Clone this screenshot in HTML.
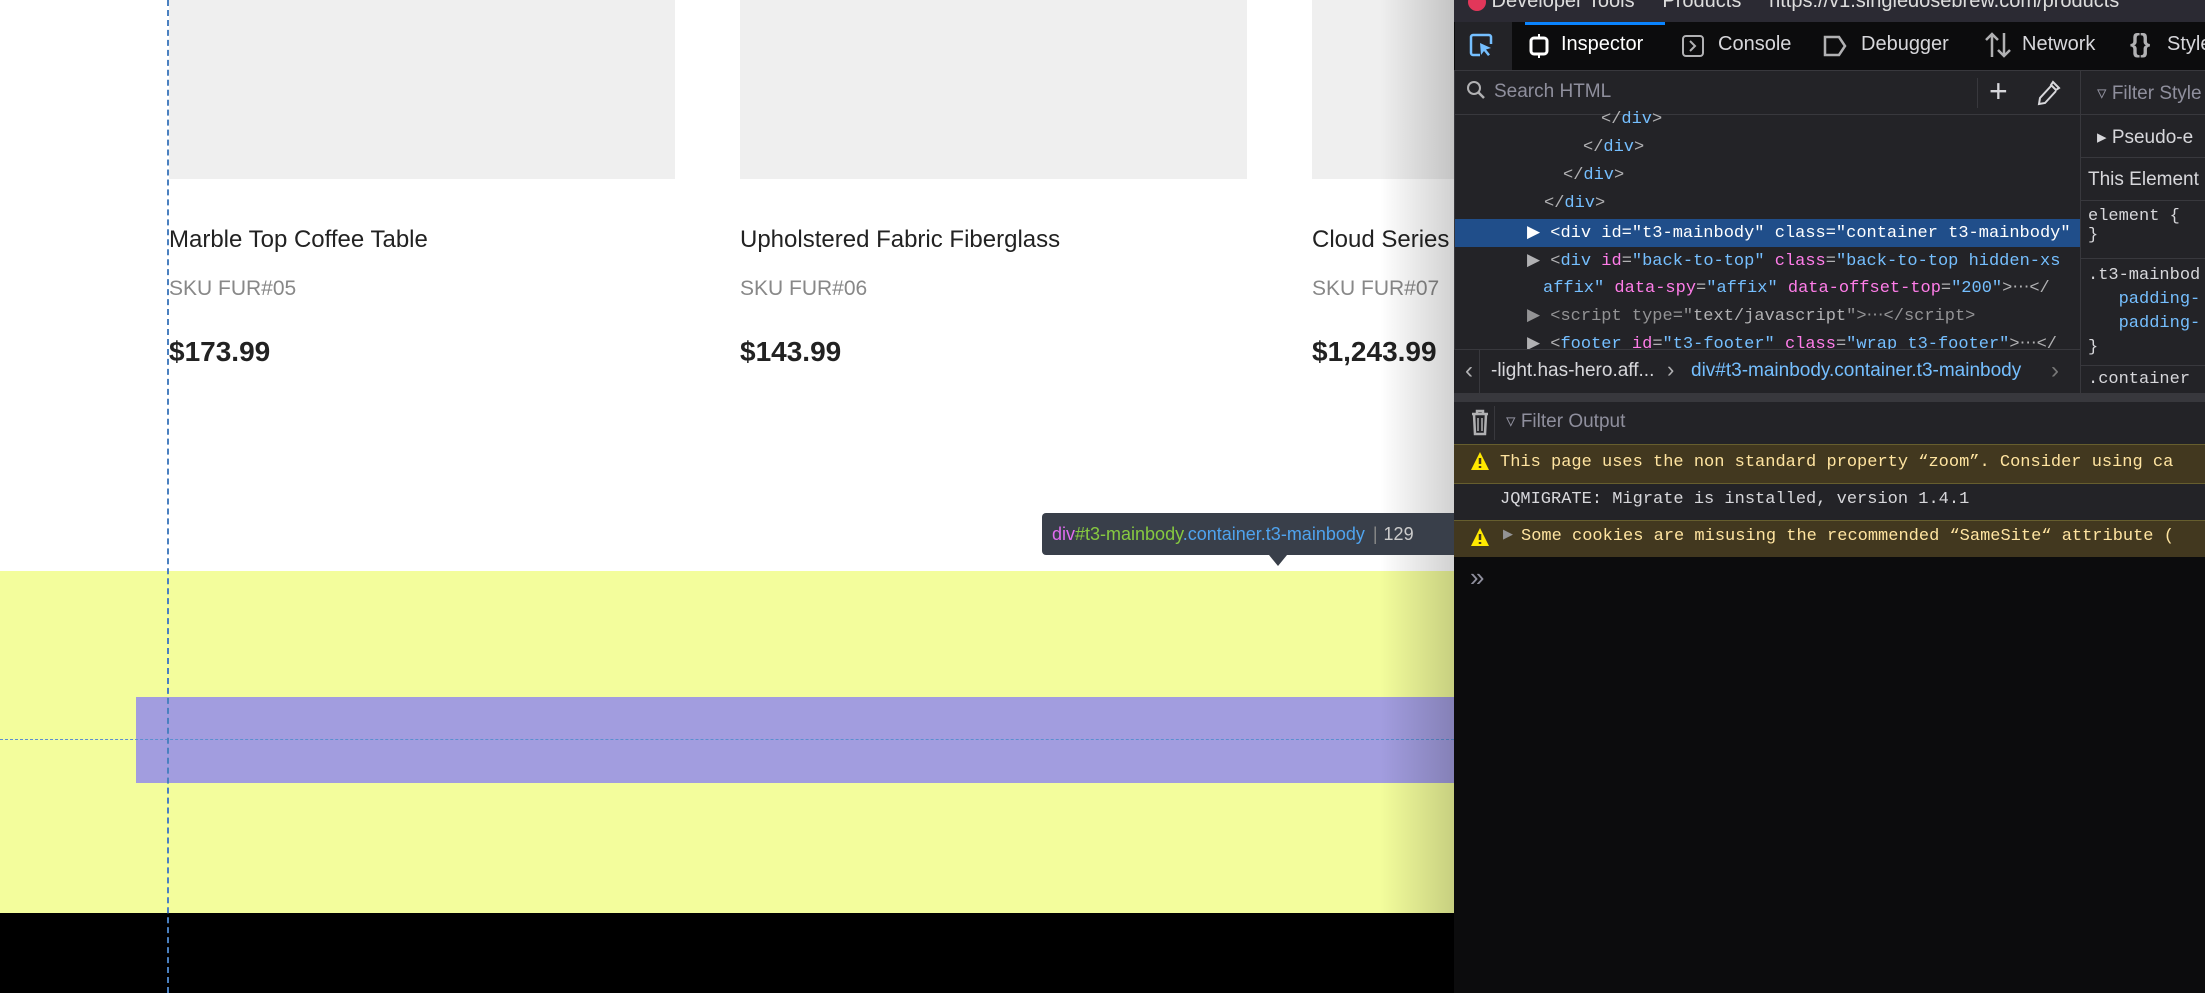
<!DOCTYPE html>
<html><head><meta charset="utf-8"><style>
*{margin:0;padding:0;box-sizing:border-box}
body{width:2205px;height:993px;overflow:hidden;position:relative;background:#fff;font-family:"Liberation Sans",sans-serif}
.a{position:absolute}
.ph{background:#efefef;top:0;height:179px}
.t{font-size:24px;color:#222;top:226px}
.s{font-size:21px;color:#888;top:277px}
.p{font-size:28px;color:#222;font-weight:bold;top:336px}
.mono{font-family:"Liberation Mono",monospace;font-size:17px;white-space:nowrap}
.tag{color:#b1b1b3}
.at{color:#ff7de9}
.av{color:#75bfff}
.ui{font-size:20px;color:#d7d7db;white-space:nowrap}
</style></head><body>
<div class="a ph" style="left:169px;width:506px"></div>
<div class="a ph" style="left:740px;width:507px"></div>
<div class="a ph" style="left:1312px;width:200px"></div>
<div class="a t" style="left:169px">Marble Top Coffee Table</div>
<div class="a t" style="left:740px">Upholstered Fabric Fiberglass</div>
<div class="a t" style="left:1312px">Cloud Series</div>
<div class="a s" style="left:169px">SKU FUR#05</div>
<div class="a s" style="left:740px">SKU FUR#06</div>
<div class="a s" style="left:1312px">SKU FUR#07</div>
<div class="a p" style="left:169px">$173.99</div>
<div class="a p" style="left:740px">$143.99</div>
<div class="a p" style="left:1312px">$1,243.99</div>
<div class="a" style="left:0;top:571px;width:1454px;height:342px;background:#f3fd9c"></div>
<div class="a" style="left:136px;top:697px;width:1318px;height:86px;background:#a29ddf"></div>
<div class="a" style="left:0;top:913px;width:1454px;height:80px;background:#000"></div>
<div class="a" style="left:0;top:739px;width:1454px;border-top:1px dashed #5b8fd0"></div>
<div class="a" style="left:167px;top:0;height:993px;border-left:2px dashed #4a80c0"></div>
<div class="a" style="left:1380px;top:0;width:74px;height:913px;background:linear-gradient(to right,rgba(0,0,0,0),rgba(0,0,0,0.18))"></div>
<div class="a" style="left:1042px;top:513px;width:420px;height:42px;background:#393f4a;border-radius:4px;font-size:18px;line-height:42px;padding-left:10px;white-space:nowrap"><span style="color:#e16cf0">div</span><span style="color:#86c940">#t3-mainbody</span><span style="color:#4fa3ee">.container.t3-mainbody</span><span style="color:#888;margin-left:8px">|</span><span style="color:#ccc;margin-left:6px">129</span></div>
<div class="a" style="left:1269px;top:555px;border-left:9px solid transparent;border-right:9px solid transparent;border-top:11px solid #393f4a"></div>
<div class="a" style="left:1454px;top:0;width:751px;height:993px;background:#232327;border-left:1px solid #38383d"></div>
<div class="a" style="left:1454px;top:0;width:751px;height:22px;background:#2b2a33;overflow:hidden"><div class="ui" style="position:absolute;left:14px;top:-10px;color:#ddd"><span style="display:inline-block;width:18px;height:18px;border-radius:50%;background:#e2375a;vertical-align:middle"></span> Developer Tools &nbsp;&nbsp;&nbsp; Products &nbsp;&nbsp;&nbsp; https://v1.singledosebrew.com/products</div></div>
<div class="a" style="left:1454px;top:22px;width:751px;height:48px;background:#0c0c0d"></div>
<div class="a" style="left:1455px;top:22px;width:57px;height:48px;background:#232327"></div>
<svg class="a" style="left:1468px;top:32px" width="28" height="28" viewBox="0 0 28 28"><path d="M12 23H5a2 2 0 0 1-2-2V5a2 2 0 0 1 2-2h16a2 2 0 0 1 2 2v7" fill="none" stroke="#75bfff" stroke-width="2.5"/><path d="M12 11l11 5-5 1.5 4 5-2 1.5-4-5-3 4z" fill="#75bfff"/></svg>
<div class="a" style="left:1525px;top:22px;width:140px;height:3px;background:#0a84ff"></div>
<svg class="a" style="left:1527px;top:33px" width="24" height="26" viewBox="0 0 24 26"><rect x="4" y="5" width="16" height="16" rx="3" fill="none" stroke="#fff" stroke-width="3"/><path d="M12 1v4M12 21v4" stroke="#fff" stroke-width="2"/></svg>
<div class="a ui" style="left:1561px;top:33px;color:#fff">Inspector</div>
<svg class="a" style="left:1681px;top:34px" width="24" height="24" viewBox="0 0 24 24"><rect x="2" y="2" width="20" height="20" rx="3" fill="none" stroke="#b1b1b3" stroke-width="2"/><path d="M9 7l5 5-5 5" fill="none" stroke="#b1b1b3" stroke-width="2"/></svg>
<div class="a ui" style="left:1718px;top:33px">Console</div>
<svg class="a" style="left:1822px;top:34px" width="26" height="24" viewBox="0 0 26 24"><path d="M3 3h14l6 9-6 9H3z" fill="none" stroke="#b1b1b3" stroke-width="2.5"/></svg>
<div class="a ui" style="left:1861px;top:33px">Debugger</div>
<svg class="a" style="left:1984px;top:31px" width="28" height="28" viewBox="0 0 28 28"><path d="M8 26V3M2 9l6-6 6 6M20 2v23M14 19l6 6 6-6" fill="none" stroke="#b1b1b3" stroke-width="2.5"/></svg>
<div class="a ui" style="left:2022px;top:33px">Network</div>
<div class="a ui" style="left:2130px;top:28px;font-size:26px;font-weight:bold;color:#b1b1b3">{}</div>
<div class="a ui" style="left:2167px;top:33px">Style</div>
<div class="a" style="left:1454px;top:70px;width:751px;height:1px;background:#38383d"></div>
<svg class="a" style="left:1466px;top:80px" width="20" height="20" viewBox="0 0 20 20"><circle cx="8" cy="8" r="6" fill="none" stroke="#b1b1b3" stroke-width="2"/><path d="M12 12l6 6" stroke="#b1b1b3" stroke-width="2.5"/></svg>
<div class="a ui" style="left:1494px;top:81px;font-size:19px;color:#8f8f9d">Search HTML</div>
<div class="a" style="left:1977px;top:78px;width:1px;height:30px;background:#38383d"></div>
<div class="a ui" style="left:1989px;top:73px;font-size:32px;color:#d7d7db">+</div>
<svg class="a" style="left:2037px;top:80px" width="24" height="26" viewBox="0 0 24 26"><path d="M16 2l6 6-3 2-5-5zM14 6l-11 12-1 6 6-1 11-12" fill="none" stroke="#d7d7db" stroke-width="2"/></svg>
<div class="a" style="left:2080px;top:70px;width:1px;height:323px;background:#38383d"></div>
<div class="a" style="left:1454px;top:114px;width:626px;height:1px;background:#38383d"></div>
<div class="a mono" style="left:1601px;top:110px"><span class="tag">&lt;/</span><span class="av">div</span><span class="tag">&gt;</span></div>
<div class="a mono" style="left:1583px;top:138px"><span class="tag">&lt;/</span><span class="av">div</span><span class="tag">&gt;</span></div>
<div class="a mono" style="left:1563px;top:166px"><span class="tag">&lt;/</span><span class="av">div</span><span class="tag">&gt;</span></div>
<div class="a mono" style="left:1544px;top:194px"><span class="tag">&lt;/</span><span class="av">div</span><span class="tag">&gt;</span></div>
<div class="a" style="left:1455px;top:219px;width:625px;height:28px;background:#204e8a"></div>
<div class="a mono" style="left:1527px;top:222px;color:#fff">&#9654; &lt;div id="t3-mainbody" class="container t3-mainbody"</div>
<div class="a mono" style="left:1527px;top:250px"><span class="tag">&#9654; &lt;</span><span class="av">div</span> <span class="at">id</span><span class="tag">=</span><span class="av">"back-to-top"</span> <span class="at">class</span><span class="tag">=</span><span class="av">"back-to-top hidden-xs</span></div>
<div class="a mono" style="left:1543px;top:277px"><span class="av">affix"</span> <span class="at">data-spy</span><span class="tag">=</span><span class="av">"affix"</span> <span class="at">data-offset-top</span><span class="tag">=</span><span class="av">"200"</span><span class="tag">&gt;&#8943;&lt;/</span></div>
<div class="a mono" style="left:1527px;top:305px;color:#939395">&#9654; &lt;script type="<span style="color:#b1b1b3">text/javascript</span>"&gt;&#8943;&lt;/script&gt;</div>
<div class="a mono" style="left:1527px;top:333px"><span class="tag">&#9654; &lt;</span><span class="av">footer</span> <span class="at">id</span><span class="tag">=</span><span class="av">"t3-footer"</span> <span class="at">class</span><span class="tag">=</span><span class="av">"wrap t3-footer"</span><span class="tag">&gt;&#8943;&lt;/</span></div>
<div class="a" style="left:1454px;top:349px;width:626px;height:44px;background:#232327;border-top:1px solid #38383d"></div>
<div class="a" style="left:1479px;top:350px;width:1px;height:43px;background:#38383d"></div>
<div class="a ui" style="left:1465px;top:357px;font-size:24px;color:#b1b1b3">&#8249;</div>
<div class="a ui" style="left:1491px;top:360px;font-size:19px">-light.has-hero.aff...</div>
<div class="a ui" style="left:1667px;top:357px;font-size:22px;color:#b1b1b3">&#8250;</div>
<div class="a ui" style="left:1691px;top:360px;font-size:19px;color:#75bfff">div#t3-mainbody.container.t3-mainbody</div>
<div class="a ui" style="left:2051px;top:357px;font-size:24px;color:#777">&#8250;</div>
<div class="a ui" style="left:2097px;top:82px;font-size:19px;color:#8f8f9d">&#9663; Filter Style</div>
<div class="a" style="left:2081px;top:114px;width:124px;height:1px;background:#38383d"></div>
<div class="a ui" style="left:2097px;top:126px;font-size:19px">&#9656; Pseudo-e</div>
<div class="a" style="left:2081px;top:157px;width:124px;height:1px;background:#38383d"></div>
<div class="a ui" style="left:2088px;top:169px;font-size:19px">This Element</div>
<div class="a" style="left:2081px;top:200px;width:124px;height:1px;background:#38383d"></div>
<div class="a mono" style="left:2088px;top:207px;color:#d7d7db">element {<br>}</div>
<div class="a" style="left:2081px;top:258px;width:124px;height:1px;background:#38383d"></div>
<div class="a mono" style="left:2088px;top:264px;color:#d7d7db;line-height:24px">.t3-mainbod<br>&nbsp;&nbsp;&nbsp;<span class="av">padding-</span><br>&nbsp;&nbsp;&nbsp;<span class="av">padding-</span><br>}</div>
<div class="a" style="left:2081px;top:365px;width:124px;height:1px;background:#38383d"></div>
<div class="a mono" style="left:2088px;top:370px;color:#d7d7db">.container</div>
<div class="a" style="left:1454px;top:393px;width:751px;height:9px;background:#38383d"></div>
<div class="a" style="left:1454px;top:402px;width:751px;height:42px;background:#232327"></div>
<svg class="a" style="left:1470px;top:408px" width="20" height="30" viewBox="0 0 20 30"><path d="M2 6h16M7 6V3h6v3M4 6l1 20h10l1-20" fill="none" stroke="#b1b1b3" stroke-width="2.5"/><path d="M8 10v13M12 10v13" stroke="#b1b1b3" stroke-width="1.5"/></svg>
<div class="a" style="left:1494px;top:406px;width:1px;height:34px;background:#38383d"></div>
<div class="a ui" style="left:1506px;top:410px;font-size:19px;color:#8f8f9d">&#9663; Filter Output</div>
<div class="a" style="left:1454px;top:444px;width:751px;height:40px;background:#42381f;border-top:1px solid #665e2e;border-bottom:1px solid #665e2e"></div>
<div class="a" style="left:1454px;top:484px;width:751px;height:36px;background:#232327"></div>
<div class="a" style="left:1454px;top:520px;width:751px;height:37px;background:#42381f;border-top:1px solid #665e2e"></div>
<div class="a" style="left:1454px;top:557px;width:751px;height:436px;background:#0c0c0d"></div>
<svg class="a" style="left:1470px;top:451px" width="20" height="20" viewBox="0 0 20 20"><path d="M10 1L19 19H1z" fill="#ffe900"/><path d="M10 7v6M10 15v2" stroke="#42381f" stroke-width="2.5"/></svg>
<div class="a mono" style="left:1500px;top:453px;color:#ffe4a0">This page uses the non standard property “zoom”. Consider using ca</div>
<div class="a mono" style="left:1500px;top:490px;color:#d7d7db">JQMIGRATE: Migrate is installed, version 1.4.1</div>
<svg class="a" style="left:1470px;top:527px" width="20" height="20" viewBox="0 0 20 20"><path d="M10 1L19 19H1z" fill="#ffe900"/><path d="M10 7v6M10 15v2" stroke="#42381f" stroke-width="2.5"/></svg>
<div class="a mono" style="left:1503px;top:527px;color:#939395;font-size:13px">&#9654;</div>
<div class="a mono" style="left:1521px;top:527px;color:#ffe4a0">Some cookies are misusing the recommended “SameSite“ attribute  (</div>
<div class="a ui" style="left:1470px;top:562px;font-size:26px;color:#8f8f9d">&#187;</div>
</body></html>
